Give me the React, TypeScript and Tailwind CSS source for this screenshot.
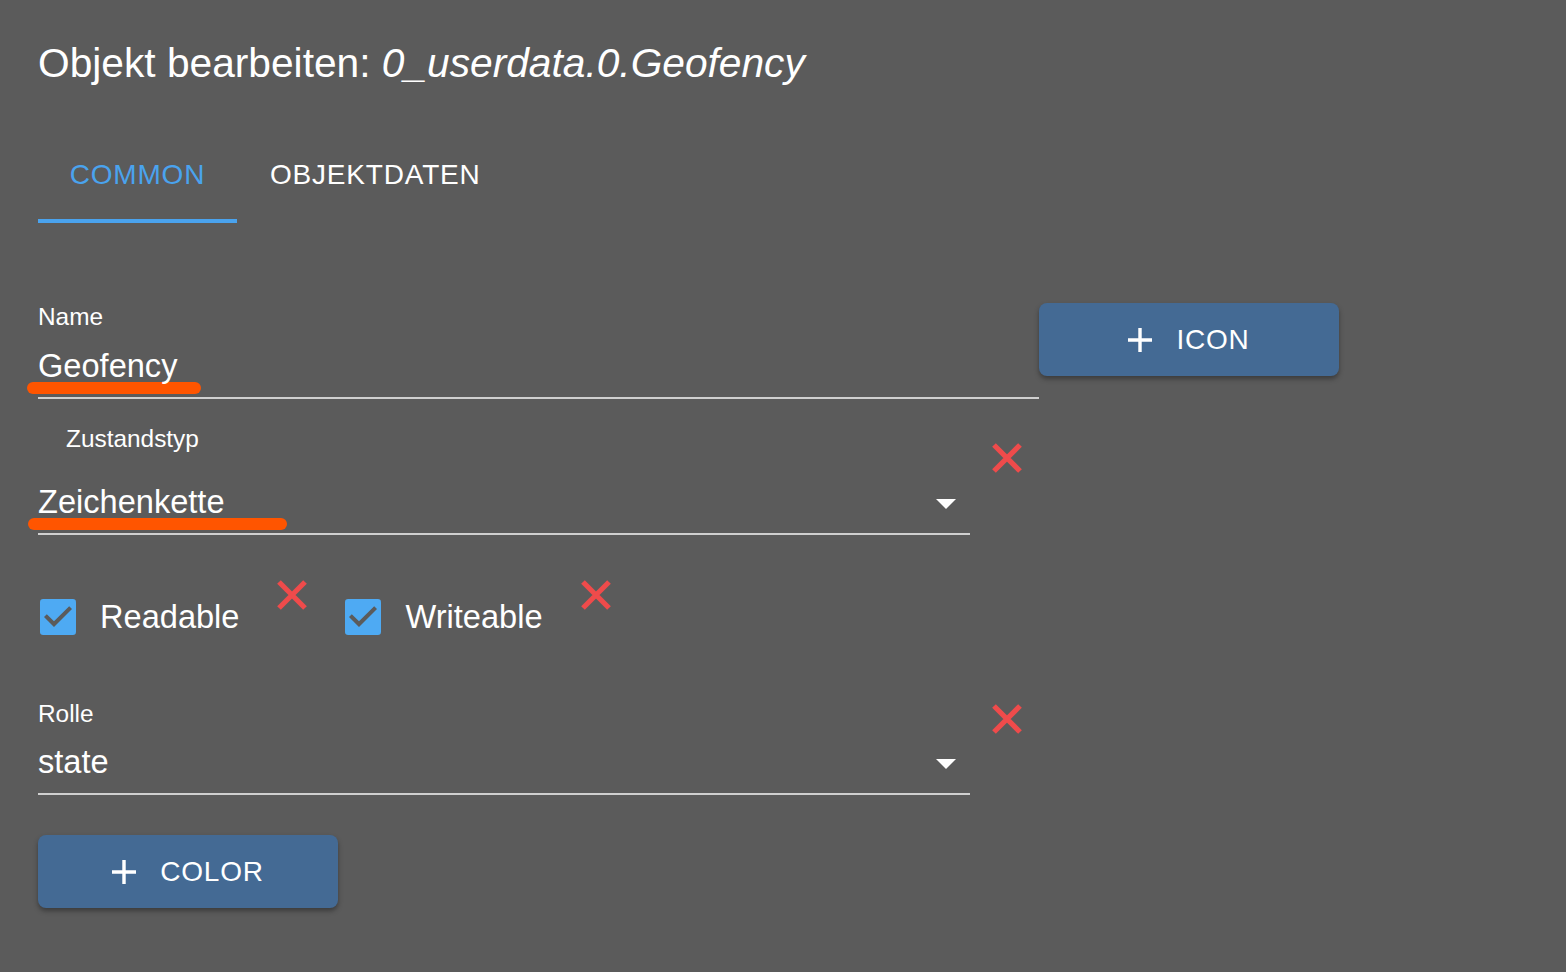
import React from "react";

const BG = "#5b5b5b";

function RedX({ className = "" }: { className?: string }) {
  return (
    <svg viewBox="0 0 32 32" className={`w-[32px] h-[32px] shrink-0 ${className}`}>
      <path d="M3 3 L29 29 M29 3 L3 29" stroke="#ef4b4b" strokeWidth="5.2" fill="none" />
    </svg>
  );
}

function Plus() {
  return (
    <svg viewBox="5 5 14 14" className="w-[24px] h-[24px] shrink-0">
      <path fill="#ffffff" d="M19 13h-6v6h-2v-6H5v-2h6V5h2v6h6v2z" />
    </svg>
  );
}

function Caret() {
  return (
    <svg viewBox="0 0 20 10" className="w-[20px] h-[10px] shrink-0 mt-[13px]">
      <path d="M0 0 L20 0 L10 10 Z" fill="#ffffff" />
    </svg>
  );
}

function Check() {
  return (
    <svg viewBox="3 3 18 18" className="w-[36px] h-[36px] shrink-0">
      <rect x="3" y="3" width="18" height="18" rx="1.6" fill="#4eaaf3" />
      <path d="M10 17l-5-5 1.41-1.41L10 14.17l7.59-7.59L19 8l-9 9z" fill={BG} />
    </svg>
  );
}

function ActionButton({ label }: { label: string }) {
  return (
    <div className="w-[300px] h-[73px] rounded-[8px] bg-[#446a94] shadow-[0_3px_5px_rgba(0,0,0,0.35)] flex items-center justify-center gap-[24px]">
      <Plus />
      <span className="text-[28px] leading-[28px] tracking-[0.8px] text-white">{label}</span>
    </div>
  );
}

export default function App() {
  return (
    <div
      className="w-full min-h-screen h-[972px] bg-[#5b5b5b] text-white pl-[38px] overflow-hidden"
      style={{ fontFamily: "'Liberation Sans', Arial, sans-serif" }}
    >
      {/* Title */}
      <div className="pt-[43px] text-[40.7px] leading-[40px] whitespace-nowrap">
        Objekt bearbeiten: <span className="italic">0_userdata.0.Geofency</span>
      </div>

      {/* Tabs */}
      <div className="mt-[44px] flex h-[96px]">
        <div className="relative w-[199px] h-full flex items-center justify-center">
          <span className="text-[28px] leading-[28px] tracking-[0.8px] text-[#4aa3ee]">COMMON</span>
          <div className="absolute left-0 right-0 bottom-0 h-[4px] bg-[#4aa3ee]" />
        </div>
        <div className="h-full flex items-center px-[33px]">
          <span className="text-[28px] leading-[28px] tracking-[0.8px] text-white">OBJEKTDATEN</span>
        </div>
      </div>

      {/* Name row */}
      <div className="mt-[80px] flex items-start">
        <div className="w-[1001px] flex flex-col">
          <div className="mt-[2px] text-[24.4px] leading-[24px]">Name</div>
          <div className="relative mt-[21px] text-[32.6px] leading-[32px]">
            <span className="relative z-10">Geofency</span>
            <div className="absolute left-[-11px] top-[32px] w-[174px] h-[12px] rounded-full bg-[#ff5500]" />
          </div>
          <div className="mt-[15px] h-[2px] bg-[#d0d0d0]" />
        </div>
        <ActionButton label="ICON" />
      </div>

      {/* Zustandstyp */}
      <div className="mt-[28px] flex items-start">
        <div className="w-[932px] flex flex-col">
          <div className="ml-[28px] text-[24.4px] leading-[24px]">Zustandstyp</div>
          <div className="relative mt-[35px] flex justify-between pr-[14px] text-[32.6px] leading-[32px]">
            <span className="relative z-10">Zeichenkette</span>
            <div className="absolute left-[-10px] top-[32px] w-[259px] h-[12px] rounded-full bg-[#ff5500]" />
            <Caret />
          </div>
          <div className="mt-[15px] h-[2px] bg-[#d0d0d0]" />
        </div>
        <RedX className="ml-[21px] mt-[15px]" />
      </div>

      {/* Checkboxes */}
      <div className="mt-[44px] flex items-start">
        <div className="ml-[2px] mt-[20px]">
          <Check />
        </div>
        <div className="ml-[24px] mt-[22px] text-[32.6px] leading-[32px]">Readable</div>
        <RedX className="ml-[37px]" />
        <div className="ml-[37px] mt-[20px]">
          <Check />
        </div>
        <div className="ml-[24px] mt-[22px] text-[32.6px] leading-[32px]">Writeable</div>
        <RedX className="ml-[37px]" />
      </div>

      {/* Rolle */}
      <div className="mt-[67px] flex items-start">
        <div className="w-[932px] flex flex-col">
          <div className="text-[24.4px] leading-[24px]">Rolle</div>
          <div className="mt-[20px] flex justify-between pr-[14px] text-[32.6px] leading-[32px]">
            <span>state</span>
            <Caret />
          </div>
          <div className="mt-[15px] h-[2px] bg-[#d0d0d0]" />
        </div>
        <RedX className="ml-[21px] mt-[1px]" />
      </div>

      {/* Color button */}
      <div className="mt-[40px]">
        <ActionButton label="COLOR" />
      </div>
    </div>
  );
}
